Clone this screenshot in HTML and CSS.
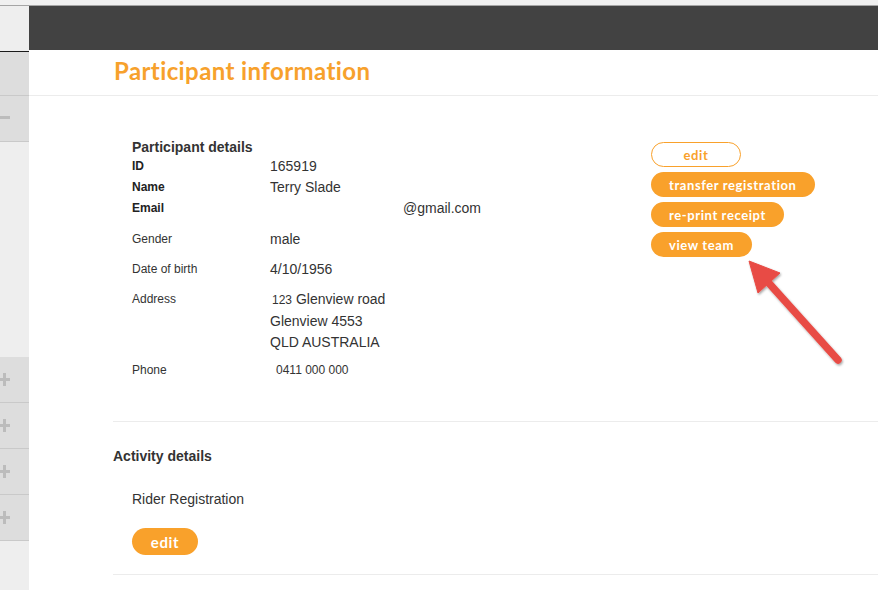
FILE: index.html
```html
<!DOCTYPE html>
<html>
<head>
<meta charset="utf-8">
<link rel="stylesheet" href="styles.css">
</head>
<body>
<div class="topstrip"></div>
<div class="layout">
  <aside class="sidebar">
    <div class="sb-head"></div>
    <div class="sb-item"></div>
    <div class="sb-item"><span class="minus"></span></div>
    <div class="sb-gap"></div>
    <div class="sb-item plus-item"><span class="plus"></span></div>
    <div class="sb-item plus-item"><span class="plus"></span></div>
    <div class="sb-item plus-item"><span class="plus"></span></div>
    <div class="sb-item plus-item"><span class="plus"></span></div>
    <div class="sb-rest"></div>
  </aside>
  <main class="main">
    <div class="topbar"></div>
    <div class="titlebar"><h1 class="title">Participant information</h1></div>
    <section class="details">
      <div class="info">
        <div class="info-head">Participant details</div>
        <div class="row"><span class="lab strong">ID</span><span class="val">165919</span></div>
        <div class="row"><span class="lab strong">Name</span><span class="val">Terry Slade</span></div>
        <div class="row"><span class="lab strong">Email</span><span class="val email">@gmail.com</span></div>
        <div class="row r-gender"><span class="lab">Gender</span><span class="val">male</span></div>
        <div class="row r-mid"><span class="lab">Date of birth</span><span class="val">4/10/1956</span></div>
        <div class="row r-mid"><span class="lab">Address</span>
          <span class="val addr"><span class="line"><span class="num">123</span> Glenview road</span><span class="line">Glenview 4553</span><span class="line">QLD AUSTRALIA</span></span></div>
        <div class="row r-phone"><span class="lab">Phone</span><span class="val phone">0411 000 000</span></div>
      </div>
      <div class="actions">
        <a class="btn btn-outline btn-edit">edit</a>
        <a class="btn">transfer registration</a>
        <a class="btn">re-print receipt</a>
        <a class="btn">view team</a>
      </div>
    </section>
    <section class="activity">
      <div class="act-head">Activity details</div>
      <div class="act-name">Rider Registration</div>
      <a class="btn btn-big">edit</a>
    </section>
  </main>
</div>
<svg class="arrow" width="878" height="590" viewBox="0 0 878 590">
  <defs>
    <filter id="sh" x="-20%" y="-20%" width="140%" height="140%">
      <feDropShadow dx="1" dy="1.5" stdDeviation="1.2" flood-color="#000" flood-opacity="0.35"/>
    </filter>
  </defs>
  <g filter="url(#sh)" fill="#e84c45" stroke="#e84c45">
    <line x1="767" y1="281" x2="838" y2="360" stroke-width="7.5" stroke-linecap="round"/>
    <polygon points="749,261 758,293 780,273" stroke-width="1" stroke-linejoin="round"/>
  </g>
</svg>
</body>
</html>
```

FILE: styles.css
```css
* { box-sizing: border-box; }
html, body { margin: 0; padding: 0; }
body {
  font-family: "Liberation Sans", Arial, sans-serif;
  color: #333;
  background: #fff;
  width: 878px;
  height: 590px;
  overflow: hidden;
  position: relative;
}
.topstrip {
  height: 6px;
  background: #f0f0f0;
  border-bottom: 1px solid #a5a5a5;
}
.layout {
  display: grid;
  grid-template-columns: 29px 1fr;
  height: 584px;
}
.sidebar {
  display: flex;
  flex-direction: column;
  background: #eeeeee;
  overflow: hidden;
}
.sb-head {
  height: 46px;
  background: #eeeeee;
  border-bottom: 1px solid #1a1a1a;
}
.sb-item {
  height: 44px;
  background: #dddddd;
  border-bottom: 1px solid #c9c9c9;
  display: flex;
  align-items: center;
}
.sb-item + .sb-item { height: 46px; }
.sb-gap { height: 215px; background: #eeeeee; }
.plus-item { height: 46px; }
.sb-rest { flex: 1; background: #eeeeee; }
.minus {
  display: block;
  width: 10px;
  height: 3px;
  background: #bcbcbc;
  margin-top: -2px;
}
.plus {
  display: block;
  position: relative;
  width: 10px;
  height: 12px;
  margin-top: -2px;
}
.plus::before, .plus::after {
  content: "";
  position: absolute;
  background: #bcbcbc;
}
.plus::before { left: 0; top: 5px; width: 10px; height: 3px; }
.plus::after { left: 3px; top: 0; width: 3px; height: 13px; }

.main { display: flex; flex-direction: column; }
.topbar { height: 44px; background: #424242; }
.titlebar {
  height: 46px;
  border-bottom: 1px solid #ececec;
  padding-left: 85px;
  padding-bottom: 4px;
  display: flex;
  align-items: center;
}
.title {
  margin: 0;
  font-family: Lato, "Liberation Sans", sans-serif;
  font-weight: 700;
  font-size: 24px;
  line-height: 28px;
  color: #f7a12c;
  letter-spacing: 0.4px;
}
.details {
  display: flex;
  padding: 42px 0 40px 19px;
  border-bottom: 1px solid #ececec;
  margin-left: 84px;
}
.info { width: 519px; }
.info-head {
  font-weight: 700;
  font-size: 14px;
  line-height: 18px;
  color: #333;
}
.row {
  display: flex;
  line-height: 21px;
}
.lab {
  width: 138px;
  font-size: 12px;
  color: #333;
  flex: none;
}
.lab.strong { font-weight: 700; font-size: 12px; color: #222; }
.val { font-size: 14px; color: #333; }
.email { padding-left: 133px; }
.r-gender { margin-top: 10px; }
.r-mid { margin-top: 9px; }
.r-phone { margin-top: 7px; }
.addr { display: flex; flex-direction: column; }
.num { font-size: 12px; margin-left: 2px; }
.phone { font-size: 12px; padding-left: 6px; }

.actions {
  display: flex;
  flex-direction: column;
  align-items: flex-start;
  gap: 5px;
  margin-top: 4px;
}
.btn {
  display: inline-flex;
  align-items: center;
  justify-content: center;
  height: 25px;
  padding: 0 18px;
  border-radius: 13px;
  background: #f9a12b;
  color: #fff;
  font-family: Lato, "Liberation Sans", sans-serif;
  font-weight: 700;
  font-size: 13px;
  letter-spacing: 0.6px;
  text-decoration: none;
}
.btn-outline {
  background: #fff;
  color: #f9a12b;
  border: 1px solid #f9a12b;
}
.btn-edit { width: 90px; }
.activity {
  margin-left: 84px;
  padding: 25px 0 19px 0;
  border-bottom: 1px solid #ececec;
  display: flex;
  flex-direction: column;
  align-items: flex-start;
}
.act-head {
  font-weight: 700;
  font-size: 14px;
  line-height: 18px;
}
.act-name {
  margin-top: 24px;
  margin-left: 19px;
  font-size: 14px;
  line-height: 20px;
}
.btn-big {
  margin-top: 19px;
  margin-left: 19px;
  height: 27px;
  width: 66px;
  padding: 0;
  font-size: 15px;
  border-radius: 14px;
}
.arrow {
  position: absolute;
  left: 0;
  top: 0;
  pointer-events: none;
}
```
